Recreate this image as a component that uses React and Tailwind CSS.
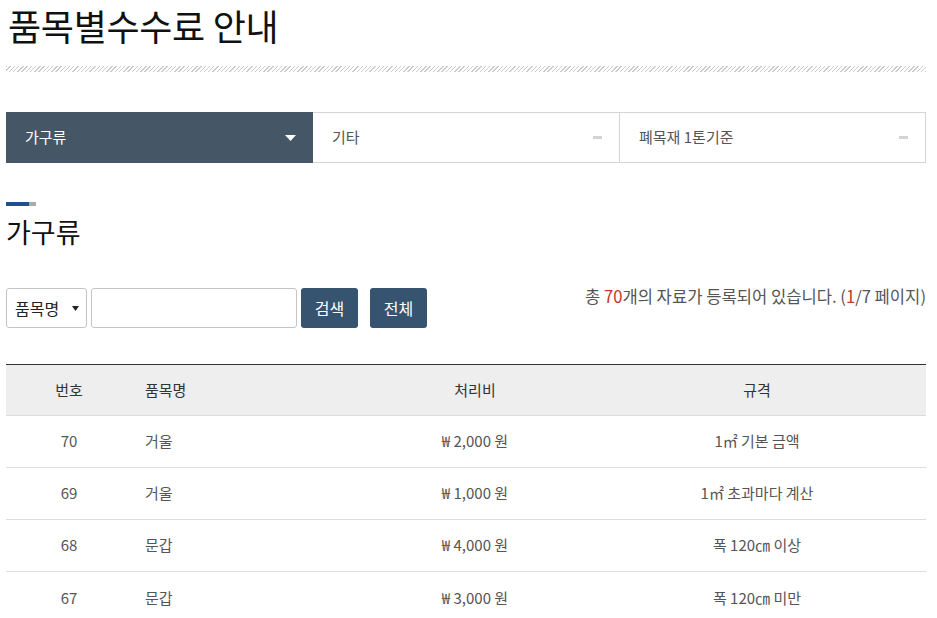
import React from "react";

const rows = [
  { no: 70, name: "거울", price: "₩ 2,000 원", spec: "1㎡ 기본 금액" },
  { no: 69, name: "거울", price: "₩ 1,000 원", spec: "1㎡ 초과마다 계산" },
  { no: 68, name: "문갑", price: "₩ 4,000 원", spec: "폭 120㎝ 이상" },
  { no: 67, name: "문갑", price: "₩ 3,000 원", spec: "폭 120㎝ 미만" },
];

export default function App() {
  return (
    <div
      className="w-[937px] h-[618px] overflow-hidden bg-white text-[#333]"
      style={{ fontFamily: '"Noto Sans CJK KR", "Noto Sans", sans-serif' }}
    >
      <div className="ml-[6px] w-[920px]">
        <h1 className="pt-[3px] pl-[2px] text-[36px] leading-[45px] text-[#111] tracking-[-0.3px]">
          품목별수수료 안내
        </h1>
        <div className="mt-[18px] h-[6px] bg-[repeating-linear-gradient(-45deg,#cccccc_0px,#cccccc_1px,transparent_1px,transparent_3px)]" />

        <div className="mt-[40px] flex h-[51px] border border-[#d5d5d5]">
          <div className="flex w-[307px] items-center justify-between bg-[#455767] pl-[19px] pr-[17px] -my-px -ml-px">
            <span className="text-[15px] text-white">가구류</span>
            <svg width="11" height="6" viewBox="0 0 11 6">
              <path d="M0 0H11L5.5 6Z" fill="#fff" />
            </svg>
          </div>
          <div className="flex w-[307px] items-center justify-between pl-[19px] pr-[17px] border-r border-[#d5d5d5]">
            <span className="text-[15px] text-[#555]">기타</span>
            <span className="h-[3px] w-[9px] bg-[#d3d3d3]" />
          </div>
          <div className="flex flex-1 items-center justify-between pl-[19px] pr-[17px]">
            <span className="text-[15px] text-[#555]">폐목재 1톤기준</span>
            <span className="h-[3px] w-[9px] bg-[#d3d3d3]" />
          </div>
        </div>

        <div className="mt-[39px] flex h-[4px]">
          <div className="w-[23px] bg-[#1d4f91]" />
          <div className="w-[7px] bg-[#aaaaaa]" />
        </div>
        <h2 className="mt-[8px] text-[27px] leading-[36px] text-[#111]">가구류</h2>

        <div className="mt-[38px] flex items-start justify-between">
          <div className="flex items-center">
            <div className="flex h-[40px] w-[81px] items-center justify-between rounded-[3px] border border-[#c4c4c4] pl-[8px] pr-[7px]">
              <span className="text-[16px] text-[#222]">품목명</span>
              <svg width="7" height="5" viewBox="0 0 7 5">
                <path d="M0 0H7L3.5 5Z" fill="#222" />
              </svg>
            </div>
            <div className="ml-[4px] h-[40px] w-[206px] rounded-[3px] border border-[#c4c4c4]" />
            <button className="ml-[4px] h-[40px] w-[57px] rounded-[3px] bg-[#36536f] text-[16px] text-white">
              검색
            </button>
            <button className="ml-[12px] h-[40px] w-[57px] rounded-[3px] bg-[#36536f] text-[16px] text-white">
              전체
            </button>
          </div>
          <p className="-mt-[3px] text-[16.6px] leading-[22px] text-[#555]">
            총 <span className="text-[#c0392b]">70</span>개의 자료가 등록되어 있습니다. (
            <span className="text-[#c0392b]">1</span>/7 페이지)
          </p>
        </div>

        <table className="mt-[36px] w-[920px] table-fixed border-t border-[#333] text-[15px]">
          <colgroup>
            <col className="w-[126px]" />
            <col className="w-[230px]" />
            <col className="w-[226px]" />
            <col className="w-[338px]" />
          </colgroup>
          <thead>
            <tr className="h-[51px] bg-[#eeeeee] text-[#333]">
              <th className="text-center font-normal">번호</th>
              <th className="pl-[13px] text-left font-normal">품목명</th>
              <th className="text-center font-normal">처리비</th>
              <th className="text-center font-normal">규격</th>
            </tr>
          </thead>
          <tbody>
            {rows.map((r) => (
              <tr key={r.no} className="h-[52px] border-t border-[#dddddd] text-[#555]">
                <td className="text-center">{r.no}</td>
                <td className="pl-[13px] text-left">{r.name}</td>
                <td className="text-center">{r.price}</td>
                <td className="text-center">{r.spec}</td>
              </tr>
            ))}
          </tbody>
        </table>
      </div>
    </div>
  );
}
